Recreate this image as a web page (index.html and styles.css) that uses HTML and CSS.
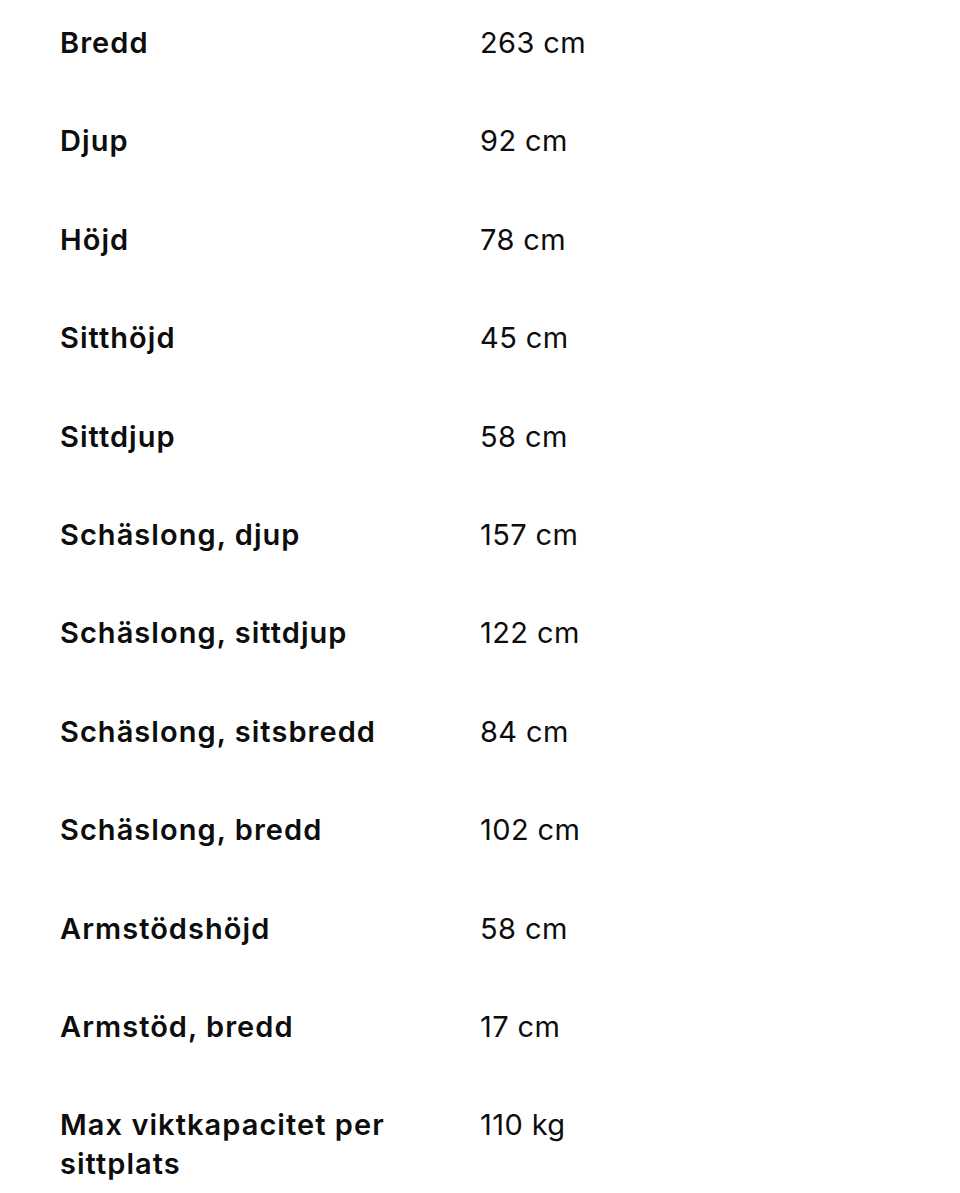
FILE: index.html
```html
<!DOCTYPE html>
<html lang="sv">
<head>
<meta charset="utf-8">
<link rel="stylesheet" href="styles.css">
</head>
<body>
<dl class="specs">
  <div class="row"><dt>Bredd</dt><dd>263 cm</dd></div>
  <div class="row"><dt>Djup</dt><dd>92 cm</dd></div>
  <div class="row"><dt>Höjd</dt><dd>78 cm</dd></div>
  <div class="row"><dt>Sitthöjd</dt><dd>45 cm</dd></div>
  <div class="row"><dt>Sittdjup</dt><dd>58 cm</dd></div>
  <div class="row"><dt>Schäslong, djup</dt><dd>157 cm</dd></div>
  <div class="row"><dt>Schäslong, sittdjup</dt><dd>122 cm</dd></div>
  <div class="row"><dt>Schäslong, sitsbredd</dt><dd>84 cm</dd></div>
  <div class="row"><dt>Schäslong, bredd</dt><dd>102 cm</dd></div>
  <div class="row"><dt>Armstödshöjd</dt><dd>58 cm</dd></div>
  <div class="row"><dt>Armstöd, bredd</dt><dd>17 cm</dd></div>
  <div class="row"><dt>Max viktkapacitet per sittplats</dt><dd>110 kg</dd></div>
</dl>
</body>
</html>
```

FILE: styles.css
```css
html, body {
  margin: 0;
  padding: 0;
  background: #ffffff;
}
body {
  font-family: Inter, "Noto Sans", sans-serif;
  color: #0d0d0d;
}
.specs {
  margin: 0;
  padding: 0 0 0 60px;
  display: flex;
  flex-direction: column;
}
.row {
  display: grid;
  grid-template-columns: 420px 1fr;
  padding: 23px 0 36.4px;
  font-size: 29px;
  line-height: 39px;
}
.row dt {
  font-weight: 600;
  letter-spacing: 1.05px;
  margin: 0;
  padding-right: 30px;
}
.row dd {
  margin: 0;
  font-weight: 400;
  letter-spacing: 0.4px;
}
```
